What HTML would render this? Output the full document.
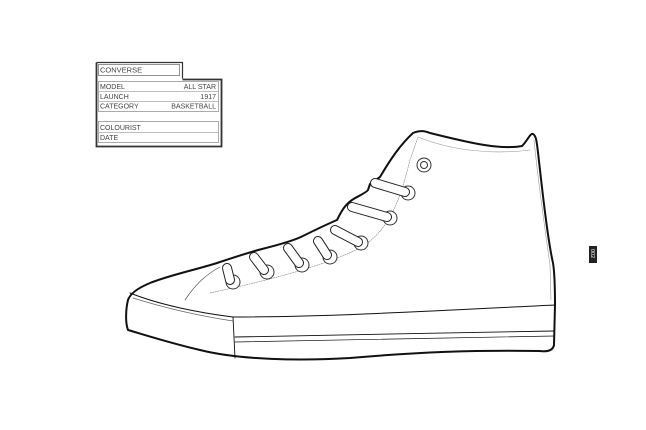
<!DOCTYPE html>
<html><head><style>
html,body{margin:0;padding:0;background:#fff;width:646px;height:430px;overflow:hidden}
svg{position:absolute;left:0;top:0}
text{font-family:"Liberation Sans",sans-serif;font-size:7px;fill:#444}
</style></head><body>
<svg width="646" height="430" viewBox="0 0 646 430">
<g fill="none" stroke="#333">
<path d="M96.5 62.5 H182.5 V78.5" stroke-width="1.2"/>
<path d="M96.5 62.5 V146.5 H221.5 V79.5 H182.5" stroke-width="1.8"/>
<rect x="98.5" y="64.5" width="81" height="11" stroke="#777" stroke-width="0.8"/>
<rect x="98.5" y="81.5" width="120" height="30" stroke="#888" stroke-width="0.7"/>
<line x1="98.5" y1="91.5" x2="218.5" y2="91.5" stroke="#aaa" stroke-width="0.7"/>
<line x1="98.5" y1="101.5" x2="218.5" y2="101.5" stroke="#aaa" stroke-width="0.7"/>
<rect x="98.5" y="121.5" width="120" height="21" stroke="#888" stroke-width="0.7"/>
<line x1="98.5" y1="132.5" x2="218.5" y2="132.5" stroke="#aaa" stroke-width="0.7"/>
</g>
<text x="100" y="72.5" style="font-size:7.5px">CONVERSE</text>
<text x="100" y="89">MODEL</text><text x="216" y="89" text-anchor="end">ALL STAR</text>
<text x="100" y="99">LAUNCH</text><text x="216" y="99" text-anchor="end">1917</text>
<text x="100" y="108.5">CATEGORY</text><text x="216" y="108.5" text-anchor="end">BASKETBALL</text>
<text x="100" y="130">COLOURIST</text>
<text x="100" y="140">DATE</text>
<rect x="589" y="246" width="8" height="17" fill="#222"/>
<text x="0" y="0" transform="translate(591,249) rotate(90)" style="font-size:5.5px;fill:#fff">002</text>
<g fill="none" stroke="#111" stroke-linejoin="round" stroke-linecap="round">
<path d="M413 133 C420 130 425 131 430 133 C470 143 500 150 522 146 C528 140 530 133 533 134 C537 136 537 145 540 170 C545 215 550 250 553 263 C555 275 555 295 555 305 L554 345 C553 350 548 352 540 351 C470 350 420 352 350 358 C300 361 240 360 200 350 C170 343 145 335 128 330 C125 322 126 308 128 300 C130 294 138 288 150 283 C170 275 195 270 217 263 C235 257 250 252 262 249 C282 244 295 240 303 236 C315 230 330 223 337 220 C342 210 345 205 352 200 C358 196 366 193 368 190 L370 184 L380 177 C390 160 400 145 413 133 Z" stroke-width="2"/>
<path d="M130 293 C160 305 200 313 233 317 C330 317 450 310 555 305" stroke-width="1"/>
<path d="M133 298 C165 308 200 316 233 321" stroke="#666" stroke-width="0.7"/>
<path d="M233 317 L235 358" stroke-width="0.9"/>
<path d="M235 337 C330 335 450 333 554 331" stroke-width="0.9"/>
<path d="M235 342 C330 340 450 338 554 336" stroke-width="0.7"/>
<path d="M185 300 C195 285 205 275 220 267" stroke="#555" stroke-width="0.7"/>
<path d="M210 293 C260 282 320 268 360 248 C390 230 400 200 410 160 L418 137" stroke="#888" stroke-width="0.6" stroke-dasharray="1.5,1"/>
<path d="M418 137 C450 150 490 155 530 150" stroke="#999" stroke-width="0.6"/>
<path d="M534 140 C538 180 545 230 550 265 L551 300" stroke="#999" stroke-width="0.6"/>
</g>
<g fill="#fff" stroke="#333" stroke-width="1">
<circle cx="424" cy="165" r="7"/><circle cx="424" cy="165" r="3.5"/>
<circle cx="408" cy="193" r="7"/>
<circle cx="390" cy="218" r="7"/>
<circle cx="361" cy="243" r="7"/>
<circle cx="330" cy="257" r="7"/>
<circle cx="302" cy="265" r="7"/>
<circle cx="267" cy="272" r="7"/>
<circle cx="233" cy="282" r="7"/>
</g>
<g fill="none" stroke-linecap="round">
<g stroke="#222" stroke-width="10">
<path d="M375 183 L405 192"/><path d="M352 207 L387 217"/><path d="M335 230 L358 242"/>
<path d="M318 241 L327 255"/><path d="M288 248 L299 263"/><path d="M254 257 L264 270"/><path d="M227 268 L230 280"/>
</g>
<g stroke="#fff" stroke-width="8">
<path d="M375 183 L405 192"/><path d="M352 207 L387 217"/><path d="M335 230 L358 242"/>
<path d="M318 241 L327 255"/><path d="M288 248 L299 263"/><path d="M254 257 L264 270"/><path d="M227 268 L230 280"/>
</g>
</g>
</svg>
</body></html>
